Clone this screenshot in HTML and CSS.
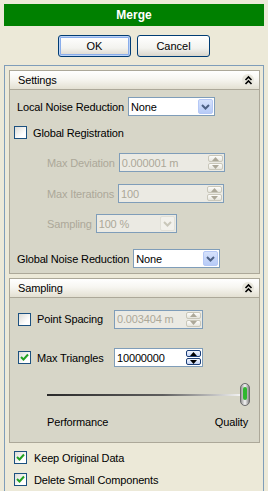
FILE: index.html
```html
<!DOCTYPE html>
<html>
<head>
    <title>Merge</title>
<link rel="stylesheet" href="styles.css">
</head>
<body>
    <div class="title">Merge</div>

    <div class="actions">
        <button class="btn btn-default">OK</button>
        <button class="btn">Cancel</button>
    </div>

    <div class="frame">
        <!-- Settings -->
        <div class="section">
            <div class="section-head">
                <span>Settings</span>
                <span class="collapse">
                    <svg width="11" height="11" viewBox="0 0 11 11"><path d="M2.5 5 L5.5 2 L8.5 5 M2.5 9 L5.5 6 L8.5 9" fill="none" stroke="#000" stroke-width="1.6"/></svg>
                </span>
            </div>
            <div class="section-body settings-body">
                <div class="row row-lnr">
                    <span class="lbl">Local Noise Reduction</span>
                    <div class="combo combo-lnr">
                        <span class="val">None</span>
                        <span class="drop"><svg width="9" height="6" viewBox="0 0 9 6"><path d="M1 1 L4.5 4.5 L8 1" fill="none" stroke="#4d6185" stroke-width="2"/></svg></span>
                    </div>
                </div>
                <div class="row row-gr">
                    <span class="check"></span>
                    <span class="lbl check-lbl">Global Registration</span>
                </div>
                <div class="row row-md sub">
                    <span class="lbl off">Max Deviation</span>
                    <div class="spin spin-md off">
                        <span class="val">0.000001 m</span>
                        <span class="arrows">
                            <span class="arr"><svg width="7" height="4" viewBox="0 0 7 4"><path d="M0 4 L3.5 0 L7 4Z" fill="#aca899"/></svg></span>
                            <span class="arr"><svg width="7" height="4" viewBox="0 0 7 4"><path d="M0 0 L3.5 4 L7 0Z" fill="#aca899"/></svg></span>
                        </span>
                    </div>
                </div>
                <div class="row row-mi sub">
                    <span class="lbl off">Max Iterations</span>
                    <div class="spin spin-mi off">
                        <span class="val">100</span>
                        <span class="arrows">
                            <span class="arr"><svg width="7" height="4" viewBox="0 0 7 4"><path d="M0 4 L3.5 0 L7 4Z" fill="#aca899"/></svg></span>
                            <span class="arr"><svg width="7" height="4" viewBox="0 0 7 4"><path d="M0 0 L3.5 4 L7 0Z" fill="#aca899"/></svg></span>
                        </span>
                    </div>
                </div>
                <div class="row row-s sub">
                    <span class="lbl off">Sampling</span>
                    <div class="combo combo-s off">
                        <span class="val">100 %</span>
                        <span class="drop"><svg width="9" height="6" viewBox="0 0 9 6"><path d="M1 1 L4.5 4.5 L8 1" fill="none" stroke="#c9c7ba" stroke-width="2"/></svg></span>
                    </div>
                </div>
                <div class="row row-gnr">
                    <span class="lbl">Global Noise Reduction</span>
                    <div class="combo combo-gnr">
                        <span class="val">None</span>
                        <span class="drop"><svg width="9" height="6" viewBox="0 0 9 6"><path d="M1 1 L4.5 4.5 L8 1" fill="none" stroke="#4d6185" stroke-width="2"/></svg></span>
                    </div>
                </div>
            </div>
        </div>

        <!-- Sampling -->
        <div class="section section-sampling">
            <div class="section-head">
                <span>Sampling</span>
                <span class="collapse">
                    <svg width="11" height="11" viewBox="0 0 11 11"><path d="M2.5 5 L5.5 2 L8.5 5 M2.5 9 L5.5 6 L8.5 9" fill="none" stroke="#000" stroke-width="1.6"/></svg>
                </span>
            </div>
            <div class="section-body sampling-body">
                <div class="row row-ps">
                    <span class="check"></span>
                    <span class="lbl check-lbl samp-lbl">Point Spacing</span>
                    <div class="spin spin-samp off">
                        <span class="val">0.003404 m</span>
                        <span class="arrows">
                            <span class="arr"><svg width="7" height="4" viewBox="0 0 7 4"><path d="M0 4 L3.5 0 L7 4Z" fill="#aca899"/></svg></span>
                            <span class="arr"><svg width="7" height="4" viewBox="0 0 7 4"><path d="M0 0 L3.5 4 L7 0Z" fill="#aca899"/></svg></span>
                        </span>
                    </div>
                </div>
                <div class="row row-mt">
                    <span class="check checked"><svg width="9" height="9" viewBox="0 0 9 9"><path d="M1 4 L3.5 6.5 L8 1.5" fill="none" stroke="#21a121" stroke-width="2"/></svg></span>
                    <span class="lbl check-lbl samp-lbl">Max Triangles</span>
                    <div class="spin spin-samp active">
                        <span class="val">10000000</span>
                        <span class="arrows">
                            <span class="arr"><svg width="7" height="4" viewBox="0 0 7 4"><path d="M0 4 L3.5 0 L7 4Z" fill="#000"/></svg></span>
                            <span class="arr"><svg width="7" height="4" viewBox="0 0 7 4"><path d="M0 0 L3.5 4 L7 0Z" fill="#000"/></svg></span>
                        </span>
                    </div>
                </div>
                <div class="slider">
                    <span class="track"></span>
                    <span class="thumb">
                        <svg width="10" height="23" viewBox="0 0 10 23">
                            <defs>
                                <linearGradient id="tg" x1="0" x2="1" y1="0" y2="0">
                                    <stop offset="0" stop-color="#8e8e8e"/>
                                    <stop offset="0.5" stop-color="#f4f4f4"/>
                                    <stop offset="1" stop-color="#7a7a7a"/>
                                </linearGradient>
                            </defs>
                            <rect x="0.5" y="0.5" width="9" height="22" rx="4.5" fill="url(#tg)" stroke="#6b6b6b"/>
                            <rect x="3" y="4" width="4" height="13" rx="2" fill="#2fb72f"/>
                        </svg>
                    </span>
                </div>
                <div class="slider-labels">
                    <span>Performance</span>
                    <span>Quality</span>
                </div>
            </div>
        </div>

        <div class="row opt opt-first">
            <span class="check checked"><svg width="9" height="9" viewBox="0 0 9 9"><path d="M1 4 L3.5 6.5 L8 1.5" fill="none" stroke="#21a121" stroke-width="2"/></svg></span>
            <span class="lbl check-lbl">Keep Original Data</span>
        </div>
        <div class="row opt">
            <span class="check checked"><svg width="9" height="9" viewBox="0 0 9 9"><path d="M1 4 L3.5 6.5 L8 1.5" fill="none" stroke="#21a121" stroke-width="2"/></svg></span>
            <span class="lbl check-lbl">Delete Small Components</span>
        </div>
    </div>
</body>
</html>
```

FILE: styles.css
```css
body {
    font-family: "Liberation Sans", Arial, sans-serif;
    font-size: 11px;
    letter-spacing: -0.15px;
    color: #000;
    margin: 0;
    padding: 0;
    background-color: #ece9d8;
    height: 491px;
    overflow: hidden;
}

.title {
    margin: 4px 4px 0;
    height: 22px;
    line-height: 22px;
    background-color: #008000;
    color: #fff;
    font-weight: bold;
    font-size: 12px;
    letter-spacing: 0;
    text-align: center;
}

.actions {
    display: flex;
    justify-content: center;
    gap: 6px;
    margin-top: 9px;
}

.btn {
    width: 73px;
    height: 22px;
    padding: 0;
    font-family: inherit;
    font-size: 11px;
    color: #000;
    border: 1px solid #003c74;
    border-radius: 3px;
    background: linear-gradient(#ffffff, #f3f3ef 60%, #d9d6cc);
}

.btn-default {
    box-shadow: inset 0 0 0 1px #bcd3f6, inset 0 0 0 2px #89adeb;
}

.frame {
    margin: 8px 4px 0;
    height: 426px;
    box-sizing: border-box;
    border: 1px solid #7f9db9;
    border-bottom: none;
    padding: 4px 3px 0 4px;
}

.section {
    border: 1px solid #aca899;
}

.section-sampling {
    margin-top: 4px;
}

.section-head {
    display: flex;
    align-items: center;
    justify-content: space-between;
    height: 18px;
    padding: 0 5px 0 8px;
    background: linear-gradient(#ffffff, #f7f6f1 45%, #e3e0d2);
    border-bottom: 1px solid #aca899;
}

.collapse {
    display: flex;
    align-items: center;
    justify-content: center;
    width: 12px;
    height: 12px;
    border-radius: 6px;
    background-color: #e8e6dc;
}

.section-body {
    background-color: #d7d6c8;
    box-sizing: border-box;
}

.settings-body {
    height: 183px;
    padding-top: 7px;
}

.sampling-body {
    height: 144px;
    padding-top: 12px;
}

.row {
    display: flex;
    align-items: center;
    height: 19px;
}

.lbl {
    white-space: nowrap;
}

.off {
    color: #aca899;
}

.row-lnr, .row-gnr {
    padding-left: 7px;
}

.row-gr {
    margin-top: 7px;
    padding-left: 4px;
}

.sub {
    padding-left: 37px;
}

.row-md { margin-top: 11px; }
.row-mi { margin-top: 12px; }
.row-s { margin-top: 11px; }
.row-gnr { margin-top: 16px; }

.check {
    display: flex;
    align-items: center;
    justify-content: center;
    width: 13px;
    height: 13px;
    box-sizing: border-box;
    border: 1px solid #1c5180;
    background: linear-gradient(135deg, #dcdcd7, #ffffff 70%);
}

.check-lbl {
    margin-left: 6px;
}

/* combo boxes */
.combo {
    display: flex;
    align-items: center;
    justify-content: space-between;
    height: 19px;
    box-sizing: border-box;
    margin-left: 4px;
    padding: 0 1px 0 2px;
    border: 1px solid #7f9db9;
    background-color: #fff;
}

.combo.off {
    background-color: #ebeae3;
}

.combo-lnr, .combo-gnr {
    width: 87px;
}

.combo-s {
    width: 81px;
}

.drop {
    display: flex;
    align-items: center;
    justify-content: center;
    width: 15px;
    height: 15px;
    box-sizing: border-box;
    border: 1px solid #b5c8f6;
    border-radius: 2px;
    background: linear-gradient(#d6e2fc, #b7cbf7);
}

.off .drop {
    border-color: #e1e0d8;
    background: #f2f1ec;
}

/* spin boxes */
.spin {
    display: flex;
    align-items: center;
    justify-content: space-between;
    height: 19px;
    box-sizing: border-box;
    margin-left: 4px;
    padding: 0 1px 0 2px;
    border: 1px solid #7f9db9;
    background-color: #fff;
}

.spin.off {
    background-color: #ebeae3;
}

.spin-md, .spin-mi {
    width: 106px;
}

.arrows {
    display: flex;
    flex-direction: column;
    gap: 1px;
}

.arr {
    display: flex;
    align-items: center;
    justify-content: center;
    width: 15px;
    height: 7px;
    box-sizing: border-box;
    border: 1px solid #c9c7ba;
    border-radius: 2px;
    background: linear-gradient(#fdfdfb, #e6e5dd);
}

.spin.active .arr {
    border-color: #1c3f78;
    background: linear-gradient(#f4f7fe, #c6d6f7);
}

/* sampling section */
.row-ps, .row-mt {
    padding-left: 8px;
}

.row-ps {
    height: 18px;
}

.row-mt {
    margin-top: 20px;
}

.samp-lbl {
    width: 77px;
}

.spin-samp {
    width: 89px;
    margin-left: 0;
}

.slider {
    display: flex;
    align-items: center;
    height: 23px;
    margin: 16px 0 0 37px;
    width: 203px;
}

.track {
    flex: 1;
    height: 2px;
    background: linear-gradient(90deg, #2a2a2a, #5e5e5e 60%, #f2f2f2);
}

.thumb {
    display: flex;
    width: 10px;
}

.slider-labels {
    display: flex;
    justify-content: space-between;
    width: 201px;
    margin: 10px 0 0 37px;
    line-height: 13px;
}

/* options below the panel */
.opt {
    padding-left: 5px;
    margin-top: 3px;
}

.opt-first {
    margin-top: 5px;
}

.opt .check-lbl {
    margin-left: 7px;
}
```
